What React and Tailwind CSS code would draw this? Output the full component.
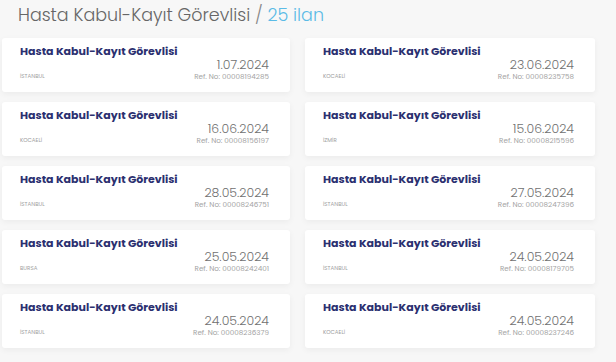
import React from "react";

const items = [
  ["İSTANBUL", "1.07.2024", "00008194285"],
  ["KOCAELİ", "23.06.2024", "00008235758"],
  ["KOCAELİ", "16.06.2024", "00008156197"],
  ["İZMİR", "15.06.2024", "00008215596"],
  ["İSTANBUL", "28.05.2024", "00008246751"],
  ["İSTANBUL", "27.05.2024", "00008247396"],
  ["BURSA", "25.05.2024", "00008242401"],
  ["İSTANBUL", "24.05.2024", "00008179705"],
  ["İSTANBUL", "24.05.2024", "00008236379"],
  ["KOCAELİ", "24.05.2024", "00008237246"],
];

function Card({ city, date, refNo }) {
  return (
    <div className="h-[54px] bg-white rounded-[3px] shadow-[0_2px_6px_rgba(0,0,0,0.05)] pl-[18px] pr-[21px] pt-[6px] flex flex-col">
      <div className="text-[11px] leading-[14px] font-bold text-[#2b3070]">
        Hasta Kabul-Kayıt Görevlisi
      </div>
      <div className="flex items-end justify-between">
        <div className="text-[5.5px] leading-[8px] text-[#a0a0a0] uppercase mb-[1px]">{city}</div>
        <div className="flex flex-col items-end">
          <div className="text-[12.5px] leading-[14px] text-[#707070] font-light">{date}</div>
          <div className="text-[7.2px] leading-[9px] text-[#a3a3a3]">Ref. No: {refNo}</div>
        </div>
      </div>
    </div>
  );
}

export default function App() {
  return (
    <div
      className="w-[616px] h-[362px] bg-[#f7f7f7] overflow-hidden"
      style={{ fontFamily: "Poppins, 'Open Sans', sans-serif" }}
    >
      <div className="h-[33px] pl-[18px] pt-[2px] text-[17.5px] leading-[26px] font-light text-[#666]">
        Hasta Kabul-Kayıt Görevlisi <span className="text-[#888]">/</span>{" "}
        <span className="text-[#5bbbe6]">25 ilan</span>
      </div>
      <div className="grid grid-cols-[288px_290px] gap-x-[15px] gap-y-[10px] pl-[2px] pt-[5px]">
        {items.map(([c, d, r], i) => (
          <Card key={i} city={c} date={d} refNo={r} />
        ))}
      </div>
    </div>
  );
}
